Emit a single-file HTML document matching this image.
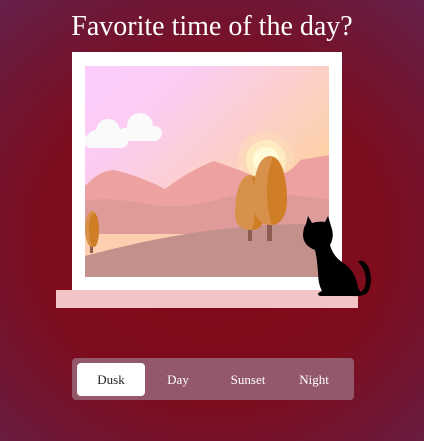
<!DOCTYPE html>
<html><head><meta charset="utf-8"><style>
html,body{margin:0;padding:0}
body{width:424px;height:441px;overflow:hidden;position:relative;font-family:"Liberation Serif",serif;
background:radial-gradient(ellipse 330px 310px at 212px 240px,#82091a 0%,#7e0c1c 50%,#6d1838 82%,#66204a 100%);}
h1{position:absolute;top:11px;left:0;width:424px;text-align:center;margin:0;font-weight:normal;font-size:28px;color:#fff}
.tabs{position:absolute;left:72px;top:358px;width:282px;height:42px;background:#93586a;border-radius:4px}
.tab{position:absolute;top:5px;height:33px;line-height:33px;font-size:13px;color:#fff;text-align:center;width:68px}
.on{background:#fff;color:#222;border-radius:4px}
</style></head><body>
<h1>Favorite time of the day?</h1>
<svg width="424" height="441" style="position:absolute;left:0;top:0">
<defs>
<linearGradient id="sky" x1="0" y1="0" x2="1" y2="0.9">
<stop offset="0" stop-color="#fbcdfd"/><stop offset="0.25" stop-color="#fcccf2"/>
<stop offset="0.6" stop-color="#fdd0c0"/><stop offset="1" stop-color="#fed57e"/></linearGradient>
<clipPath id="c"><rect x="85" y="66" width="244" height="211"/></clipPath>
</defs>
<rect x="72" y="52" width="270" height="240" fill="#fff"/>
<g clip-path="url(#c)">
<rect x="85" y="66" width="244" height="211" fill="url(#sky)"/>
<circle cx="266" cy="160" r="28" fill="#fde0b8" opacity="0.5"/>
<circle cx="266" cy="160" r="20" fill="#feecc0"/>
<circle cx="266" cy="160" r="13" fill="#fffbd8"/>
<path d="M85 186 Q100 170 114 170 Q140 176 165 189 Q190 170 214 161 Q240 170 264 180 Q290 175 300 160 L329 155 L329 277 L85 277Z" fill="#eda1a0"/>
<path d="M85 201 Q110 196 150 205 Q190 210 230 196 Q290 192 329 200 L329 277 L85 277Z" fill="#de9b9a"/>
<rect x="85" y="234" width="244" height="43" fill="#fdcfb0"/>
<path d="M85 256 Q200 225 300 224 L329 226 L329 277 L85 277Z" fill="#c3918c"/>
<g fill="#fafafa"><circle cx="108" cy="131" r="12"/><circle cx="96" cy="139" r="9"/><circle cx="118" cy="140" r="8"/><rect x="84" y="134" width="44" height="14" rx="7"/>
<circle cx="140" cy="126" r="13"/><circle cx="155" cy="133" r="7"/><rect x="118" y="128" width="43" height="13" rx="6"/></g>
<rect x="248" y="226" width="4" height="15" fill="#8c5c50"/>
<rect x="267" y="222" width="5" height="19" fill="#8c5c50"/>
<rect x="90" y="242" width="3" height="11" fill="#8c5c50"/>
<path d="M250 175 C262 175 265 200 265 213 C265 226 258 230 250 230 C242 230 235 226 235 213 C235 200 238 175 250 175Z" fill="#d8914a"/>
<path d="M252 176 C262 180 265 200 265 213 C265 226 258 230 252 230 C256 215 256 195 252 176Z" fill="#cf7e25"/>
<path d="M270 156 C284 156 287 185 287 200 C287 216 280 225 270 225 C260 225 253 216 253 200 C253 185 256 156 270 156Z" fill="#d8914a"/>
<path d="M273 157 C284 162 287 185 287 200 C287 216 280 225 272 225 C266 205 264 180 273 157Z" fill="#cf7e25"/>
<ellipse cx="92" cy="229" rx="7" ry="18" fill="#d8914a"/>
<ellipse cx="94" cy="230" rx="5" ry="17" fill="#cf7e25"/>
</g>
<rect x="56" y="290" width="302" height="18" fill="#f2c4c6"/>
<path d="M308 216 L312 223 Q318 221 325 222 L328 216 L331 226 Q335 236 330 245 Q333 256 342 262 Q354 270 357 283 Q358 290 361 292 Q366 288 366 280 Q365 268 358 262 Q362 258 368 266 Q374 280 368 292 Q364 297 352 296 L320 296 Q315 294 322 291 Q318 284 318 272 Q317 258 315 250 Q304 246 303 236 Q303 228 306 224Z" fill="#000"/>
</svg>
<div class="tabs">
<div class="tab on" style="left:5px">Dusk</div>
<div class="tab" style="left:72px">Day</div>
<div class="tab" style="left:142px">Sunset</div>
<div class="tab" style="left:208px">Night</div>
</div>
</body></html>
